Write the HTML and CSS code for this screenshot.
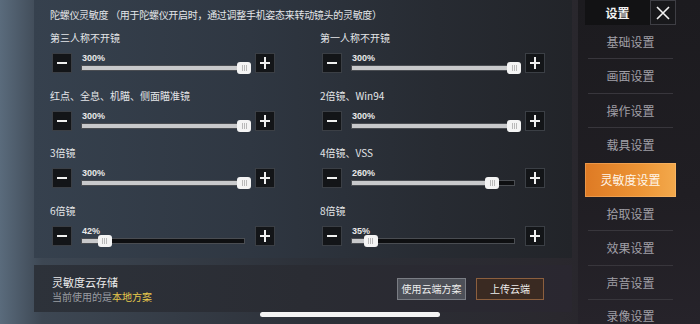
FILE: index.html
```html
<!DOCTYPE html>
<html lang="zh-CN">
<head>
<meta charset="utf-8">
<title>设置</title>
<link rel="stylesheet" href="styles.css">
</head>
<body>
<div class="screen">
  <div class="main">
    <section class="panel">
      <div class="title">陀螺仪灵敏度 （用于陀螺仪开启时，通过调整手机姿态来转动镜头的灵敏度）</div>
      <div class="grid">
        <div class="cell">
          <div class="label">第三人称不开镜</div>
          <div class="ctrl">
            <span class="btn minus"></span>
            <div class="slider"><div class="pct">300%</div><div class="track"><div class="fill" style="width:100%"></div><div class="knob" style="left:100%"></div></div></div>
            <span class="btn plus"></span>
          </div>
        </div>
        <div class="cell">
          <div class="label">第一人称不开镜</div>
          <div class="ctrl">
            <span class="btn minus"></span>
            <div class="slider"><div class="pct">300%</div><div class="track"><div class="fill" style="width:100%"></div><div class="knob" style="left:100%"></div></div></div>
            <span class="btn plus"></span>
          </div>
        </div>
        <div class="cell">
          <div class="label">红点、全息、机瞄、侧面瞄准镜</div>
          <div class="ctrl">
            <span class="btn minus"></span>
            <div class="slider"><div class="pct">300%</div><div class="track"><div class="fill" style="width:100%"></div><div class="knob" style="left:100%"></div></div></div>
            <span class="btn plus"></span>
          </div>
        </div>
        <div class="cell">
          <div class="label">2倍镜、Win94</div>
          <div class="ctrl">
            <span class="btn minus"></span>
            <div class="slider"><div class="pct">300%</div><div class="track"><div class="fill" style="width:100%"></div><div class="knob" style="left:100%"></div></div></div>
            <span class="btn plus"></span>
          </div>
        </div>
        <div class="cell">
          <div class="label">3倍镜</div>
          <div class="ctrl">
            <span class="btn minus"></span>
            <div class="slider"><div class="pct">300%</div><div class="track"><div class="fill" style="width:100%"></div><div class="knob" style="left:100%"></div></div></div>
            <span class="btn plus"></span>
          </div>
        </div>
        <div class="cell">
          <div class="label">4倍镜、VSS</div>
          <div class="ctrl">
            <span class="btn minus"></span>
            <div class="slider"><div class="pct">260%</div><div class="track"><div class="fill" style="width:86.7%"></div><div class="knob" style="left:86.7%"></div></div></div>
            <span class="btn plus"></span>
          </div>
        </div>
        <div class="cell">
          <div class="label">6倍镜</div>
          <div class="ctrl">
            <span class="btn minus"></span>
            <div class="slider"><div class="pct">42%</div><div class="track"><div class="fill" style="width:14%"></div><div class="knob" style="left:14%"></div></div></div>
            <span class="btn plus"></span>
          </div>
        </div>
        <div class="cell">
          <div class="label">8倍镜</div>
          <div class="ctrl">
            <span class="btn minus"></span>
            <div class="slider"><div class="pct">35%</div><div class="track"><div class="fill" style="width:11.7%"></div><div class="knob" style="left:11.7%"></div></div></div>
            <span class="btn plus"></span>
          </div>
        </div>
      </div>
    </section>
    <section class="cloud">
      <div class="cloud-text">
        <div class="cloud-title">灵敏度云存储</div>
        <div class="cloud-sub">当前使用的是<span class="local">本地方案</span></div>
      </div>
      <button class="cbtn use">使用云端方案</button>
      <button class="cbtn upload">上传云端</button>
    </section>
  </div>
  <aside class="side">
    <div class="side-col">
      <div class="side-head">
        <div class="side-title">设置</div>
        <div class="close">
          <svg width="16" height="16" viewBox="0 0 16 16"><path d="M2 2L14 14M14 2L2 14" stroke="#f2f2f2" stroke-width="1.6" fill="none"/></svg>
        </div>
      </div>
      <div class="item">基础设置</div>
      <div class="item">画面设置</div>
      <div class="item">操作设置</div>
      <div class="item pre">载具设置</div>
      <div class="item active">灵敏度设置</div>
      <div class="item">拾取设置</div>
      <div class="item">效果设置</div>
      <div class="item">声音设置</div>
      <div class="item last">录像设置</div>
    </div>
  </aside>
  <div class="home-bar"></div>
</div>
</body>
</html>
```

FILE: styles.css
```css
html, body {
  margin: 0;
  padding: 0;
}
body {
  width: 700px;
  height: 324px;
  overflow: hidden;
  font-family: "Noto Sans CJK SC", "Noto Sans", sans-serif;
  background: #26262b;
}
.screen {
  position: relative;
  display: flex;
  width: 700px;
  height: 324px;
  overflow: hidden;
  background: linear-gradient(90deg, #5a6b7c 0%, #3d4753 6%, #2c3038 45%, #2a282e 80%, #232126 100%);
}
.main {
  width: 578px;
  padding-left: 34px;
  box-sizing: border-box;
  flex: none;
}
.panel {
  width: 538px;
  height: 258px;
  box-sizing: border-box;
  padding: 7px 0 0 16px;
  background: linear-gradient(90deg, #36414e 0%, #2f3742 40%, #272b32 75%, #222429 100%);
}
.title {
  font-size: 10px;
  line-height: 16px;
  color: #e4e6e9;
  white-space: nowrap;
  letter-spacing: -0.3px;
}
.grid {
  margin-top: 7px;
  display: grid;
  grid-template-columns: 270px 230px;
  grid-auto-rows: 57.5px;
}
.label {
  font-size: 10px;
  line-height: 16px;
  color: #e4e6e9;
  white-space: nowrap;
}
.ctrl {
  display: flex;
  align-items: flex-start;
  margin-top: 7px;
  height: 20px;
}
.btn {
  position: relative;
  display: block;
  width: 20px;
  height: 20px;
  box-sizing: border-box;
  background: #131518;
  border: 1px solid #3b3f45;
  flex: none;
}
.minus {
  margin-left: 2px;
}
.plus {
  margin-left: 11px;
}
.btn::before,
.btn::after {
  content: "";
  position: absolute;
  background: #f0f0f0;
}
.btn::before {
  left: 4px;
  right: 4px;
  top: 8px;
  height: 2px;
}
.minus::after {
  display: none;
}
.plus::after {
  top: 3px;
  bottom: 3px;
  left: 8px;
  width: 2px;
}
.slider {
  margin-left: 10px;
  width: 162px;
  flex: none;
}
.pct {
  font-family: "Liberation Sans", Arial, sans-serif;
  font-size: 9px;
  font-weight: bold;
  line-height: 11px;
  height: 11px;
  color: #e8e8e8;
}
.track {
  position: relative;
  margin-top: 2px;
  height: 4px;
  background: #0e0f11;
  box-shadow: 0 0 0 1px #4a4d52;
}
.fill {
  height: 100%;
  background: #c8c9cb;
}
.knob {
  position: absolute;
  top: -4px;
  width: 14px;
  height: 12px;
  margin-left: -7px;
  box-sizing: border-box;
  border-radius: 3px;
  background: #f4f4f4;
  display: flex;
  justify-content: center;
  align-items: center;
}
.knob::before {
  content: "";
  width: 5px;
  height: 6px;
  background: repeating-linear-gradient(90deg, #b9b9b9 0 1px, transparent 1px 2px);
}
.cloud {
  margin-top: 7px;
  width: 538px;
  height: 47px;
  box-sizing: border-box;
  padding: 0 28px 0 18px;
  display: flex;
  align-items: center;
  background: linear-gradient(90deg, #2d323a 0%, #2a2c33 50%, #2a2730 100%);
}
.cloud-text {
  flex: 1;
}
.cloud-title {
  font-size: 11px;
  line-height: 14px;
  color: #ececec;
}
.cloud-sub {
  margin-top: 1px;
  font-size: 10px;
  line-height: 13px;
  color: #9a9da2;
}
.local {
  color: #e8c94c;
}
.cbtn {
  font-family: "Noto Sans CJK SC", "Noto Sans", sans-serif;
  font-size: 10px;
  color: #eeeeee;
  width: 69px;
  height: 22px;
  padding: 0;
  box-sizing: border-box;
  cursor: pointer;
}
.use {
  background: #4d5058;
  border: 1px solid #7a7d84;
}
.upload {
  margin-left: 10px;
  width: 68px;
  background: #3a2a22;
  border: 1px solid #8c5f3e;
}
.side {
  flex: none;
  width: 122px;
  height: 324px;
  background: linear-gradient(180deg, #1c1b1f 0%, #201e23 60%, #26232a 100%);
}
.side-col {
  margin-left: 7px;
  width: 91px;
}
.side-head {
  display: flex;
  height: 25px;
}
.side-title {
  width: 65px;
  background: #121214;
  color: #f0f0f0;
  font-size: 12px;
  line-height: 25px;
  text-align: center;
  font-weight: bold;
}
.close {
  width: 26px;
  height: 25px;
  box-sizing: border-box;
  border: 1px solid #3e3e44;
  background: #18181b;
  display: flex;
  align-items: center;
  justify-content: center;
}
.item {
  height: 34.4px;
  box-sizing: border-box;
  margin: 0 3px;
  border-bottom: 1px solid #38363c;
  color: #a09fa6;
  font-size: 12px;
  line-height: 34px;
  text-align: center;
}
.item.pre {
  border-bottom: none;
}
.item.last {
  height: 24px;
  padding-top: 9px;
  line-height: 14px;
  border-bottom: none;
}
.item.active {
  margin: 0;
  border-bottom: none;
  color: #fff6ea;
  background: linear-gradient(90deg, #de7a24 0%, #ec9435 60%, #f3a94c 100%);
  box-shadow: inset 0 0 0 1px rgba(255, 200, 140, 0.35);
}
.home-bar {
  position: absolute;
  left: 260px;
  top: 312px;
  width: 180px;
  height: 5px;
  border-radius: 3px;
  background: #f4f4f4;
}
```
